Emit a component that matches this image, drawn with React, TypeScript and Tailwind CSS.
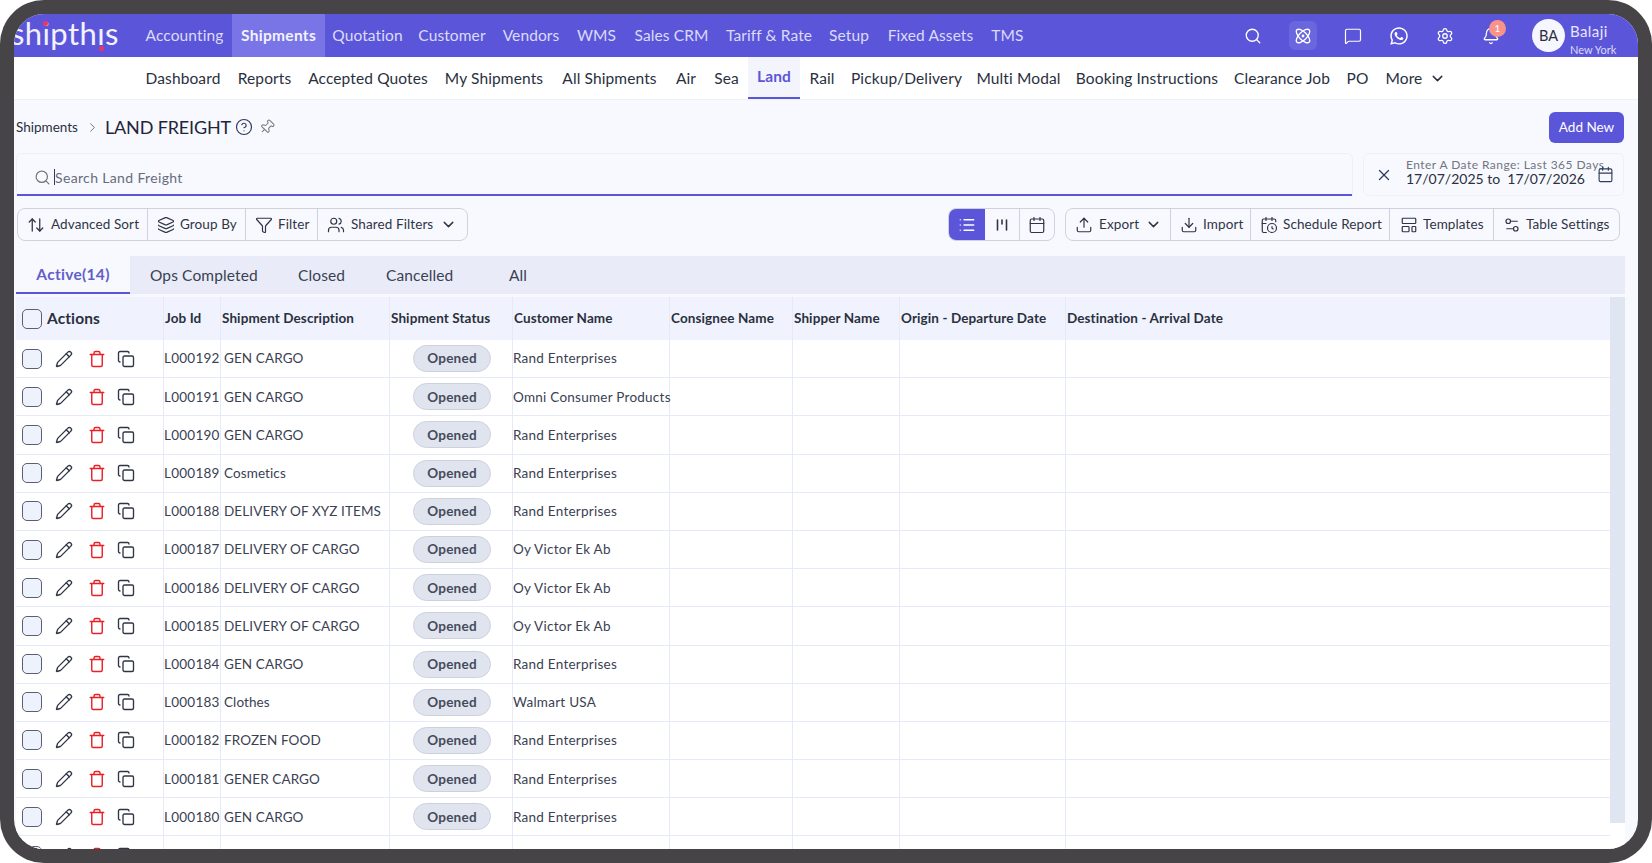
import {
  ArrowUpDown,
  Atom,
  Bell,
  Calendar,
  CalendarClock,
  ChevronDown,
  ChevronRight,
  CircleHelp,
  Copy,
  Download,
  Filter,
  Layers,
  LayoutTemplate,
  List,
  MessageSquare,
  Pencil,
  Pin,
  Search,
  Settings,
  Settings2,
  Trash,
  Upload,
  Users,
  X,
} from "lucide-react"
import { FaWhatsapp } from "react-icons/fa"

const mainNav = [
  { label: "Accounting", w: "w-[95px]" },
  { label: "Shipments", w: "w-[93px]" },
  { label: "Quotation", w: "w-[85px]" },
  { label: "Customer", w: "w-[84px]" },
  { label: "Vendors", w: "w-[74px]" },
  { label: "WMS", w: "w-[57px]" },
  { label: "Sales CRM", w: "w-[93px]" },
  { label: "Tariff & Rate", w: "w-[102px]" },
  { label: "Setup", w: "w-[58px]" },
  { label: "Fixed Assets", w: "w-[105px]" },
  { label: "TMS", w: "w-[49px]" },
]

const subNav = [
  { label: "Dashboard", w: "w-[92px]" },
  { label: "Reports", w: "w-[71px]" },
  { label: "Accepted Quotes", w: "w-[136px]" },
  { label: "My Shipments", w: "w-[116px]" },
  { label: "All Shipments", w: "w-[115px]" },
  { label: "Air", w: "w-[38px]" },
  { label: "Sea", w: "w-[43px]" },
  { label: "Land", w: "w-[52px]" },
  { label: "Rail", w: "w-[44px]" },
  { label: "Pickup/Delivery", w: "w-[125px]" },
  { label: "Multi Modal", w: "w-[99px]" },
  { label: "Booking Instructions", w: "w-[158px]" },
  { label: "Clearance Job", w: "w-[112px]" },
  { label: "PO", w: "w-[39px]" },
]

const rows = [
  ["L000192", "GEN CARGO", "Rand Enterprises"],
  ["L000191", "GEN CARGO", "Omni Consumer Products"],
  ["L000190", "GEN CARGO", "Rand Enterprises"],
  ["L000189", "Cosmetics", "Rand Enterprises"],
  ["L000188", "DELIVERY OF XYZ ITEMS", "Rand Enterprises"],
  ["L000187", "DELIVERY OF CARGO", "Oy Victor Ek Ab"],
  ["L000186", "DELIVERY OF CARGO", "Oy Victor Ek Ab"],
  ["L000185", "DELIVERY OF CARGO", "Oy Victor Ek Ab"],
  ["L000184", "GEN CARGO", "Rand Enterprises"],
  ["L000183", "Clothes", "Walmart USA"],
  ["L000182", "FROZEN FOOD", "Rand Enterprises"],
  ["L000181", "GENER CARGO", "Rand Enterprises"],
  ["L000180", "GEN CARGO", "Rand Enterprises"],
]

const cols = "grid grid-cols-[148px_57px_169px_123px_157px_123px_107px_166px_1fr]"
const cell = "border-r border-[#e6e9f7] flex items-center min-w-0 whitespace-nowrap"

function ToolItem({ icon, label, chevron, className }: { icon: React.ReactNode; label: string; chevron?: boolean; className: string }) {
  return (
    <div className={`flex items-center h-full border-r border-[#cfd2dc] last:border-r-0 text-[13.5px] tracking-[0.1px] text-[#2f3545] ${className}`}>
      {icon}
      <span>{label}</span>
      {chevron && <ChevronDown size={17} strokeWidth={2} className="ml-auto" />}
    </div>
  )
}

function KanbanIcon() {
  return (
    <svg width="14" height="14" viewBox="0 0 14 14" fill="none" stroke="#2f3545" strokeWidth="1.6" strokeLinecap="round">
      <path d="M2.5 2v10M7 2v4M11.5 2v10" />
    </svg>
  )
}

function RowActions() {
  return (
    <div className={`${cell} pl-[6px]`}>
      <span className="w-[20px] h-[20px] rounded-[5px] border border-[#5a6072] bg-[#eef2fc] shrink-0" />
      <Pencil size={18} strokeWidth={1.8} className="ml-[13px] text-[#2f3545]" />
      <Trash size={18} strokeWidth={1.9} className="ml-[15px] text-[#ea2027]" />
      <Copy size={18} strokeWidth={1.8} className="ml-[11px] text-[#2f3545]" />
    </div>
  )
}

export default function App() {
  return (
    <div className="w-[1652px] h-[863px] bg-white overflow-hidden font-['Lato','Noto_Sans',sans-serif]">
      <div className="w-full h-full bg-[#464446] rounded-[44px] p-[14px]">
        <div className="w-full h-full bg-[#f8f9fe] rounded-[30px] overflow-hidden flex flex-col">
          {/* Main nav */}
          <header className="h-[43px] shrink-0 bg-[#5b56d9] flex items-center text-white">
            <div className="relative w-[123px] h-full shrink-0 overflow-hidden">
              <span className="absolute left-[-3px] top-[-2px] text-[31px] leading-[43px] tracking-[0.4px] text-[#f3f2ff] whitespace-nowrap">shipthıs</span>
              <span className="absolute left-[29px] top-[7px] w-[5px] h-[5px] rounded-full bg-[#f0345f]" />
              <span className="absolute left-[85px] top-[32px] w-[5px] h-[5px] rounded-full bg-[#f0345f]" />
            </div>
            <nav className="flex items-stretch h-full">
              {mainNav.map((item) => (
                <div
                  key={item.label}
                  className={`flex items-center justify-center whitespace-nowrap text-[15.5px] ${item.w} ${
                    item.label === "Shipments" ? "bg-[#7a75e6] font-bold tracking-[0.3px] text-[#f3f2ff]" : "tracking-[0.1px] text-[#dcdbf8]"
                  }`}
                >
                  {item.label}
                </div>
              ))}
            </nav>
            <div className="ml-auto flex items-center h-full">
              <div className="w-[46px] flex justify-center"><Search size={18} strokeWidth={1.8} /></div>
              <div className="w-[54px] flex justify-center">
                <div className="w-[28px] h-[29px] rounded-md bg-[#6a66de] flex items-center justify-center"><Atom size={18} strokeWidth={1.8} /></div>
              </div>
              <div className="w-[46px] flex justify-center"><MessageSquare size={18} strokeWidth={1.6} /></div>
              <div className="w-[46px] flex justify-center"><FaWhatsapp size={20} /></div>
              <div className="w-[46px] flex justify-center"><Settings size={18} strokeWidth={1.7} /></div>
              <div className="relative w-[46px] flex justify-center">
                <Bell size={18} strokeWidth={1.7} />
                <span className="absolute left-[21px] top-[-7px] w-[17px] h-[17px] rounded-full bg-[#f9938a] text-[10px] leading-[17px] text-center">1</span>
              </div>
              <div className="w-[106px] ml-[18px] flex items-center">
                <div className="w-[33px] h-[33px] rounded-full bg-[#f6f6fe] text-[#2a2d3a] text-[14.5px] flex items-center justify-center shrink-0">BA</div>
                <div className="ml-[5px] flex flex-col pt-[6px]">
                  <span className="text-[15px] leading-[20px] tracking-[0.4px] text-[#e6e5fb]">Balaji</span>
                  <span className="text-[11px] leading-[15px] text-[#dcdbf8] mt-[1px]">New York</span>
                </div>
              </div>
            </div>
          </header>

          {/* Sub nav */}
          <div className="h-[43px] shrink-0 bg-white border-b border-[#eef0f8] flex items-stretch pl-[123px] text-[15.5px] tracking-[0.12px] text-[#2a3040]">
            {subNav.map((item) => (
              <div
                key={item.label}
                className={`flex items-center justify-center whitespace-nowrap pt-[1px] ${item.w} ${
                  item.label === "Land" ? "bg-[#f4f4fd] border-b-2 border-[#5b56d9] text-[#5b56d9] font-bold pb-[1px]" : ""
                }`}
              >
                {item.label}
              </div>
            ))}
            <div className="flex items-center pl-[8.5px] pt-[1px] gap-[7px]">
              More <ChevronDown size={17} strokeWidth={2} />
            </div>
          </div>

          {/* Title row */}
          <div className="h-[53px] shrink-0 flex items-center pl-[2px] pr-[14px] pt-[1px]">
            <span className="text-[13.5px] text-[#2a3040]">Shipments</span>
            <ChevronRight size={15} strokeWidth={1.6} className="ml-[7px] text-[#71757f]" />
            <span className="ml-[5px] text-[18px] tracking-[-0.15px] text-[#1f2537]">LAND FREIGHT</span>
            <CircleHelp size={18} strokeWidth={1.6} className="ml-[4px] text-[#2f3a5c]" />
            <Pin size={16} strokeWidth={1.5} className="ml-[6px] rotate-45 text-[#71757f]" />
            <button className="ml-auto w-[75px] h-[31px] bg-[#5b56d9] rounded-md text-[13.5px] text-white">Add New</button>
          </div>

          {/* Search and date range */}
          <div className="h-[43px] shrink-0 flex gap-[10px] pl-[2px] pr-[14px]">
            <div className="w-[1337px] h-[43px] bg-[#f8f9fe] rounded-t-md border border-b-0 border-[#eef0f8] shadow-[inset_0_-2px_0_#5b56d9] flex items-center pl-[17px] pt-[4px] text-[14px] text-[#666c7c] tracking-[0.35px]">
              <Search size={17} strokeWidth={1.7} className="text-[#71757f]" />
              <span className="ml-[3px] w-px h-[16px] bg-[#2f3a5c]" />
              <span>Search Land Freight</span>
            </div>
            <div className="relative flex-1 rounded-md border border-[#eef0f8] flex items-center">
              <X size={18} strokeWidth={1.7} className="ml-[11px] text-[#2f3a5c]" />
              <div className="ml-[13px] flex flex-col mb-[4px]">
                <span className="text-[12px] leading-[13px] tracking-[0.45px] text-[#71757f] whitespace-nowrap">Enter A Date Range: Last 365 Days</span>
                <span className="text-[14px] leading-[16px] text-[#2a3040] whitespace-nowrap">17/07/2025 to&nbsp; 17/07/2026</span>
              </div>
              <Calendar size={17} strokeWidth={1.6} className="absolute right-[9px] top-[12px] text-[#2f3a5c]" />
            </div>
          </div>

          {/* Toolbar */}
          <div className="h-[33px] mt-[12px] shrink-0 flex pl-[3px] pr-[18px]">
            <div className="flex items-center h-full border border-[#cfd2dc] rounded-lg">
              <ToolItem icon={<ArrowUpDown size={18} strokeWidth={1.7} className="mr-[6px]" />} label="Advanced Sort" className="w-[130px] pl-[9px]" />
              <ToolItem icon={<Layers size={18} strokeWidth={1.6} className="mr-[5px]" />} label="Group By" className="w-[98px] pl-[9px]" />
              <ToolItem icon={<Filter size={18} strokeWidth={1.6} className="mr-[5px]" />} label="Filter" className="w-[72px] pl-[9px]" />
              <ToolItem icon={<Users size={18} strokeWidth={1.6} className="mr-[6px]" />} label="Shared Filters" chevron className="w-[149px] pl-[9px] pr-[10px]" />
            </div>
            <div className="ml-auto flex items-center h-full border border-[#cfd2dc] rounded-lg overflow-hidden">
              <div className="w-[36px] h-full bg-[#5b56d9] flex items-center justify-center text-white"><List size={18} strokeWidth={1.7} /></div>
              <div className="w-[35px] h-full border-r border-[#cfd2dc] flex items-center justify-center"><KanbanIcon /></div>
              <div className="w-[34px] h-full flex items-center justify-center text-[#2f3545]"><Calendar size={18} strokeWidth={1.6} /></div>
            </div>
            <div className="ml-[10px] flex items-center h-full border border-[#cfd2dc] rounded-lg">
              <ToolItem icon={<Upload size={18} strokeWidth={1.6} className="mr-[6px]" />} label="Export" chevron className="w-[105px] pl-[9px] pr-[8px]" />
              <ToolItem icon={<Download size={18} strokeWidth={1.6} className="mr-[5px]" />} label="Import" className="w-[80px] pl-[9px]" />
              <ToolItem icon={<CalendarClock size={18} strokeWidth={1.6} className="mr-[5px]" />} label="Schedule Report" className="w-[139px] pl-[9px]" />
              <ToolItem icon={<LayoutTemplate size={18} strokeWidth={1.6} className="mr-[5px]" />} label="Templates" className="w-[104px] pl-[10px]" />
              <ToolItem icon={<Settings2 size={18} strokeWidth={1.6} className="mr-[5px]" />} label="Table Settings" className="w-[125px] pl-[9px]" />
            </div>
          </div>

          {/* Tabs */}
          <div className="h-[38px] mt-[15px] shrink-0 ml-[2px] mr-[13px] bg-[#e9ecf8] flex items-stretch text-[15.5px] tracking-[0.12px] text-[#3a4152]">
            <div className="w-[114px] bg-[#f8f9fe] border-b-2 border-[#5b56d9] text-[#625fc8] font-bold tracking-[0.3px] flex items-center justify-center pt-[1px]">Active(14)</div>
            <div className="w-[168px] flex items-center pl-[20px] pt-[1px]">Ops Completed</div>
            <div className="w-[88px] flex items-center pt-[1px]">Closed</div>
            <div className="w-[123px] flex items-center pt-[1px]">Cancelled</div>
            <div className="flex items-center pt-[1px]">All</div>
          </div>

          {/* Table */}
          <div className="flex-1 min-h-0 mt-[3px] ml-[2px] mr-[13px] flex overflow-hidden">
            <div className="flex-1 min-w-0 bg-white">
              <div className={`${cols} h-[43px] bg-[#f0f3fd] text-[13.5px] font-bold tracking-[0.1px] text-[#2a3040]`}>
                <div className={`${cell} pl-[6px] gap-[5px]`}>
                  <span className="w-[20px] h-[20px] rounded-[5px] border border-[#5a6072] shrink-0" />
                  <span className="text-[15.5px]">Actions</span>
                </div>
                {["Job Id", "Shipment Description", "Shipment Status", "Customer Name", "Consignee Name", "Shipper Name", "Origin - Departure Date"].map((h) => (
                  <div key={h} className={`${cell} pl-[1px]`}>{h}</div>
                ))}
                <div className="flex items-center pl-[1px]">Destination - Arrival Date</div>
              </div>
              {rows.map(([job, desc, customer]) => (
                <div key={job} className={`${cols} h-[38.2px] border-b border-[#e6e9f7] text-[13.5px] tracking-[0.25px] text-[#3a4152]`}>
                  <RowActions />
                  <div className={cell}>{job}</div>
                  <div className={`${cell} pl-[3px] tracking-[0.1px]`}>{desc}</div>
                  <div className={`${cell} justify-center pl-[2px]`}>
                    <span className="w-[78px] h-[27px] rounded-full bg-[#e0e4ef] border border-[#cdd1dd] font-bold text-[#454a5a] flex items-center justify-center">Opened</span>
                  </div>
                  <div className={cell}>{customer}</div>
                  <div className={cell} />
                  <div className={cell} />
                  <div className={cell} />
                  <div />
                </div>
              ))}
              {/* Row cut off by the frame: only the tops of its icons show */}
              <div className={`${cols} h-[38.2px]`}>
                <RowActions />
                <div className={cell} />
                <div className={cell} />
                <div className={cell} />
                <div className={cell} />
                <div className={cell} />
                <div className={cell} />
                <div className={cell} />
                <div />
              </div>
            </div>
            <div className="w-[15px] shrink-0 bg-white">
              <div className="h-[526px] bg-[#e0e5f2]" />
            </div>
          </div>
        </div>
      </div>
    </div>
  )
}
